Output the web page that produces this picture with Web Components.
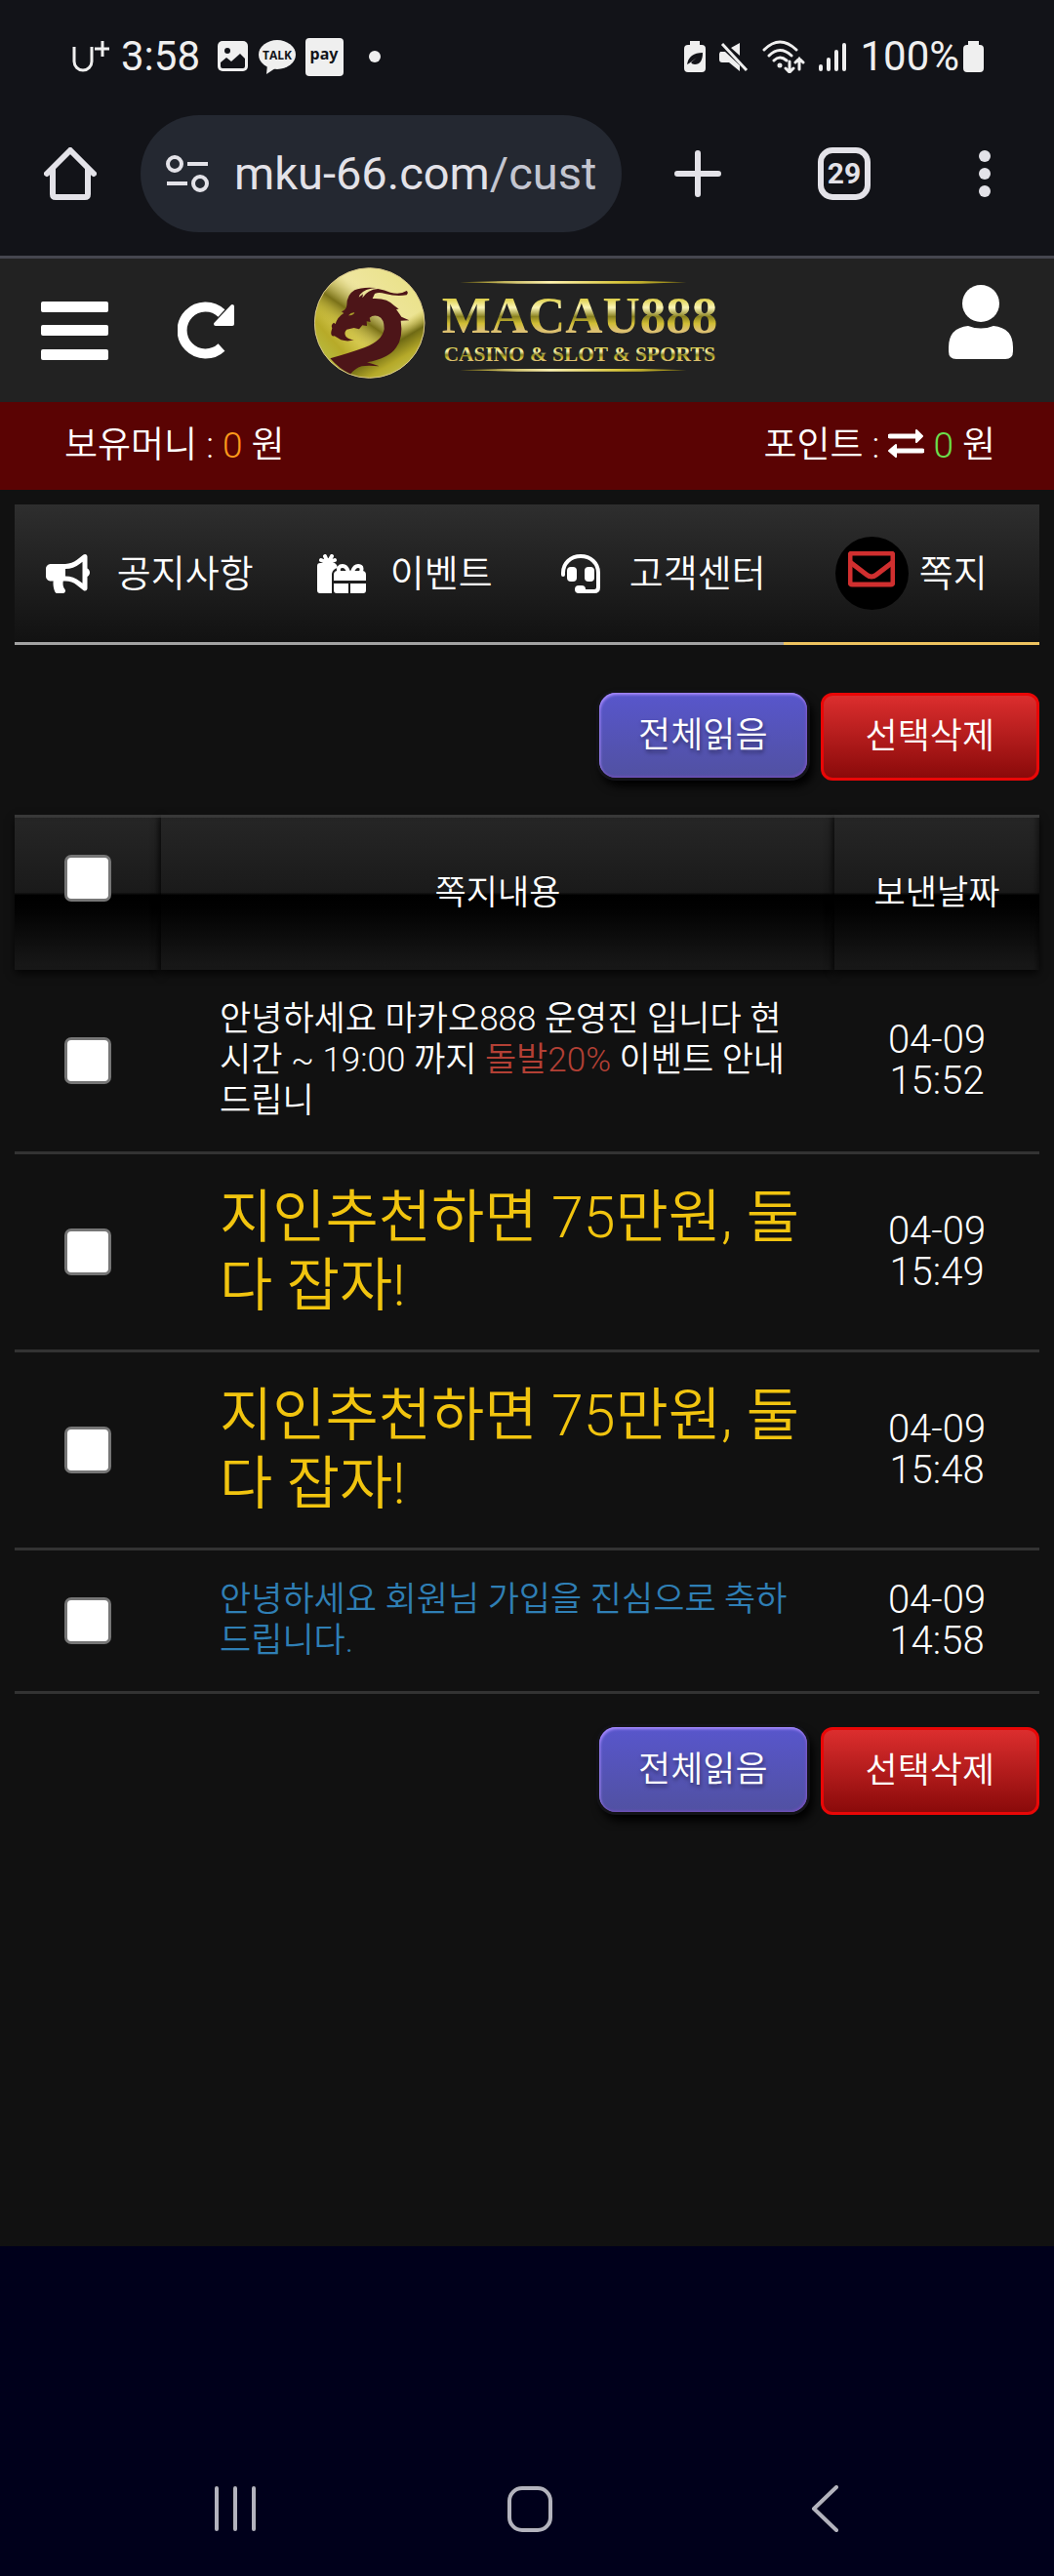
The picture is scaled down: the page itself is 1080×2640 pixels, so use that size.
<!DOCTYPE html>
<html lang="ko">
<head>
<meta charset="utf-8">
<meta name="viewport" content="width=device-width, initial-scale=1">
<title>쪽지</title>
<style>
  html, body { margin: 0; }
  body {
    min-height: 100vh;
    display: flex;
    flex-direction: column;
    background: #111;
    color: #fff;
    font-family: Roboto, "Noto Sans CJK KR", sans-serif;
    font-weight: 350;
    font-size: 36px;
    line-height: 42px;
  }
  main { flex: 1; padding: 15px 15px 0; }
</style>
</head>
<body>
  <phone-status time="3:58" battery="100%"></phone-status>
  <browser-bar host="mku-66.com" path="/cust" tabs="29"></browser-bar>
  <site-header></site-header>
  <money-bar></money-bar>
  <main>
    <site-nav>
      <nav-tab icon="notice">공지사항</nav-tab>
      <nav-tab icon="event">이벤트</nav-tab>
      <nav-tab icon="support">고객센터</nav-tab>
      <nav-tab icon="mail" active>쪽지</nav-tab>
    </site-nav>
    <action-row>
      <gloss-button type="read">전체읽음</gloss-button>
      <gloss-button type="delete">선택삭제</gloss-button>
    </action-row>
    <message-table></message-table>
    <action-row>
      <gloss-button type="read">전체읽음</gloss-button>
      <gloss-button type="delete">선택삭제</gloss-button>
    </action-row>
  </main>
  <system-nav></system-nav>

<script>
/** Attaches an open shadow root and fills it once */
class BaseElement extends HTMLElement {
  constructor() {
    super();
    this.attachShadow({ mode: 'open' });
  }

  connectedCallback() {
    this.shadowRoot.innerHTML = this.template();
  }

  template() {
    return '<slot></slot>';
  }
}

class PhoneStatus extends BaseElement {
  template() {
    return `
      <style>
        :host {
          display: flex;
          align-items: center;
          justify-content: space-between;
          height: 116px;
          padding: 0 72px;
          background: #121318;
          color: #efefef;
          font: 400 42px/48px Roboto, sans-serif;
        }
        div { display: flex; align-items: center; }
        svg { display: block; fill: currentColor; }
        .left { gap: 12px; }
        .apps { gap: 10px; margin-left: 6px; }
        .dot { width: 12px; height: 12px; border-radius: 50%; background: currentColor; margin-left: 16px; }
        .right { gap: 14px; }
        .level { gap: 4px; }
      </style>
      <div class="left">
        <svg width="40" height="36" viewBox="0 0 40 36" fill="none" aria-label="U+">
          <path d="M4 8v15a9 9 0 0 0 18 0V8" fill="none" stroke="currentColor" stroke-width="3"/>
          <path d="M25 10h15M33 2v16" stroke="currentColor" stroke-width="3"/>
        </svg>
        <span>${this.getAttribute('time')}</span>
        <div class="apps">
          <svg width="32" height="32" viewBox="0 0 32 32" aria-hidden="true">
            <rect width="31" height="31" rx="5"/>
            <circle cx="10" cy="10" r="3" fill="#121318"/>
            <path d="M3 22l6-5 5 4 9-8 5 5v8q0 2-2 2H5q-2 0-2-2z" fill="#121318"/>
          </svg>
          <svg width="38" height="36" viewBox="0 0 38 36" aria-hidden="true">
            <ellipse cx="19" cy="16" rx="19" ry="15"/>
            <path d="M9 26l-1 10 9-6z"/>
            <text x="19" y="21" text-anchor="middle" font-family="Open Sans, sans-serif" font-weight="700" font-size="12" fill="#121318">TALK</text>
          </svg>
          <svg width="39" height="39" viewBox="0 0 39 39" aria-hidden="true">
            <rect width="39" height="39" rx="4"/>
            <text x="19" y="22" text-anchor="middle" font-family="Noto Sans, sans-serif" font-weight="700" font-size="16" fill="#121318">pay</text>
          </svg>
          <span class="dot"></span>
        </div>
      </div>
      <div class="right">
        <svg width="22" height="32" viewBox="0 0 22 32" aria-hidden="true">
          <path d="M6 0h10v4h2q4 0 4 4v20q0 4-4 4H4q-4 0-4-4V8q0-4 4-4h2z"/>
          <path d="M3 24q2-12 16-12 0 12-8 12-3 0-4-2l6-5-8 6z" fill="#121318"/>
        </svg>
        <svg width="30" height="32" viewBox="0 0 30 32" aria-hidden="true">
          <path d="M21 2v13l-9-8zM1 11h5l15 14v6L10 22H3q-3 0-3-3v-6z"/>
          <path d="M3 3l25 27" stroke="currentColor" stroke-width="3"/>
        </svg>
        <svg width="44" height="34" viewBox="0 0 44 34" fill="none" stroke="currentColor" stroke-width="3" stroke-linecap="round" aria-hidden="true">
          <path d="M2 10q16-16 33 0M7 16q11-11 23 0M12 21q6-6 13 0" fill="none"/>
          <circle cx="18" cy="26" r="1"/>
          <path d="M28 22v10M24 29l4 4 4-4M38 30V19M34 23l4-4 4 4" fill="none"/>
        </svg>
        <svg width="28" height="32" viewBox="0 0 28 32" stroke="currentColor" stroke-width="4" stroke-linecap="round" aria-hidden="true">
          <path d="M2 26v3M10 19v10M18 11v18M26 4v25"/>
        </svg>
        <div class="level">
          <span>${this.getAttribute('battery')}</span>
          <svg width="21" height="32" viewBox="0 0 21 32" aria-hidden="true">
            <path d="M5 0h11v4h1q4 0 4 4v20q0 4-4 4H4q-4 0-4-4V8q0-4 4-4h1z"/>
          </svg>
        </div>
      </div>`;
  }
}

class BrowserBar extends BaseElement {
  template() {
    return `
      <style>
        :host {
          display: flex;
          align-items: center;
          padding: 2px 45px 24px;
          background: #121318;
          border-bottom: 3px solid #45464f;
          color: #e3e2e8;
          font-family: Roboto, sans-serif;
          font-weight: 400;
        }
        button {
          flex: none;
          padding: 0;
          border: 0;
          background: none;
          color: inherit;
          font: inherit;
        }
        svg { display: block; }
        .address {
          flex: 1;
          min-width: 0;
          height: 120px;
          margin: 0 54px 0 45px;
          padding: 0 20px 0 26px;
          box-sizing: border-box;
          border-radius: 60px;
          background: #242831;
          display: flex;
          align-items: center;
          gap: 25px;
        }
        .address svg { flex: none; }
        .url { font-size: 47px; line-height: 56px; white-space: nowrap; overflow: hidden; }
        .url span { color: #c3c5d0; }
        .tabs {
          width: 54px;
          height: 54px;
          margin: 0 111px 0 99px;
          border: 6px solid;
          border-radius: 15px;
          font-size: 30px;
          line-height: 42px;
          font-weight: 700;
        }
        .more { margin-right: 20px; }
      </style>
      <button type="button" aria-label="홈">
        <svg width="54" height="54" viewBox="0 0 54 54" fill="none" stroke="currentColor" stroke-width="6" stroke-linecap="round" stroke-linejoin="round">
          <path d="M3 27L27 3l24 24M9 22v26q0 3 3 3h30q3 0 3-3V22"/>
        </svg>
      </button>
      <div class="address">
        <svg width="45" height="38" viewBox="0 0 45 38" fill="none" stroke="currentColor" stroke-width="4" aria-hidden="true">
          <circle cx="9" cy="9" r="7"/><path d="M22 9h21M1 29h21"/><circle cx="35" cy="29" r="7"/>
        </svg>
        <div class="url">${this.getAttribute('host')}<span>${this.getAttribute('path')}</span></div>
      </div>
      <button type="button" aria-label="새 탭">
        <svg width="48" height="48" viewBox="0 0 48 48" stroke="currentColor" stroke-width="6" stroke-linecap="round"><path d="M24 3v42M3 24h42"/></svg>
      </button>
      <button type="button" class="tabs">${this.getAttribute('tabs')}</button>
      <button type="button" class="more" aria-label="메뉴">
        <svg width="12" height="48" viewBox="0 0 12 48" fill="currentColor"><circle cx="6" cy="6" r="6"/><circle cx="6" cy="24" r="6"/><circle cx="6" cy="42" r="6"/></svg>
      </button>`;
  }
}

class SiteHeader extends BaseElement {
  template() {
    return `
      <style>
        :host {
          display: flex;
          align-items: center;
          height: 147px;
          padding: 0 42px;
          background: #222;
        }
        button, a { display: block; flex: none; padding: 0; border: 0; background: none; color: #fff; }
        svg { display: block; }
        .reload { margin: 0 82px 0 71px; }
        .user { margin-left: auto; }
      </style>
      <button type="button" aria-label="메뉴">
        <svg width="69" height="60" viewBox="0 0 69 60" fill="currentColor">
          <rect width="69" height="11" rx="2"/><rect y="24" width="69" height="11" rx="2"/><rect y="49" width="69" height="11" rx="2"/>
        </svg>
      </button>
      <button type="button" class="reload" aria-label="새로고침">
        <svg width="58" height="59" viewBox="0 0 58 59" fill="currentColor">
          <path d="M45 47A24 24 0 1 1 45 12" fill="none" stroke="currentColor" stroke-width="10"/>
          <path d="M56 5v18H39z" stroke="currentColor" stroke-width="4" stroke-linejoin="round"/>
        </svg>
      </button>
      <a href="#" aria-label="MACAU888"><brand-logo></brand-logo></a>
      <button type="button" class="user" aria-label="내 정보">
        <svg width="66" height="94" viewBox="0 0 66 94" fill="currentColor">
          <circle cx="33" cy="19" r="19"/>
          <path d="M20 42q13 5 26 0 20 2 20 22v4q0 8-8 8H8q-8 0-8-8v-4q0-20 20-22z"/>
        </svg>
      </button>`;
  }
}

class BrandLogo extends BaseElement {
  template() {
    return `
      <style>
        :host { display: block; }
        svg { display: block; }
        text { font-family: "Liberation Serif", serif; font-weight: 700; }
      </style>
      <svg width="413" height="130" viewBox="66 42 1239 390">
        <defs>
          <linearGradient id="coin" x1="0" y1=".85" x2=".85" y2="0.1">
            <stop offset="0" stop-color="#b9c24a"/>
            <stop offset=".22" stop-color="#b7aa28"/>
            <stop offset=".38" stop-color="#d8cb52"/>
            <stop offset=".62" stop-color="#efe6a0"/>
            <stop offset="1" stop-color="#eae28a"/>
          </linearGradient>
          <linearGradient id="sheen" x1=".2" y1="0" x2=".8" y2="1">
            <stop offset="0" stop-color="#efe6a0" stop-opacity="0"/>
            <stop offset=".62" stop-color="#c0b030" stop-opacity="0"/>
            <stop offset=".74" stop-color="#6f6a14"/>
            <stop offset=".86" stop-color="#b5a929"/>
            <stop offset="1" stop-color="#c6c552"/>
          </linearGradient>
          <linearGradient id="shade" x1=".1" y1=".55" x2=".42" y2=".08">
            <stop offset=".1" stop-color="#b7aa28" stop-opacity="0"/>
            <stop offset=".45" stop-color="#7a7118"/>
            <stop offset=".9" stop-color="#efe6a0" stop-opacity="0"/>
          </linearGradient>
          <linearGradient id="letters" x1="0" y1="0" x2="0" y2="1">
            <stop offset=".18" stop-color="#d9c93a"/>
            <stop offset=".36" stop-color="#fbf5b6"/>
            <stop offset=".52" stop-color="#8a8220"/>
            <stop offset=".64" stop-color="#d0bd34"/>
            <stop offset=".76" stop-color="#dcc070"/>
          </linearGradient>
          <linearGradient id="rule">
            <stop offset="0" stop-color="#8a7a10"/>
            <stop offset=".4" stop-color="#fff3b0"/>
            <stop offset=".7" stop-color="#d8c63c"/>
            <stop offset="1" stop-color="#8a7a10"/>
          </linearGradient>
        </defs>
        <circle cx="236" cy="213" r="169" fill="url(#coin)"/>
        <circle cx="236" cy="213" r="169" fill="url(#shade)"/>
        <circle cx="236" cy="213" r="169" fill="url(#sheen)" stroke="#d9c88a" stroke-width="3"/>
        <path fill="#4d1518" d="M115 322Q175 305 222 288Q275 268 281 232Q282 200 262 192Q246 188 236 197L239 210L227 208L228 222L214 220L204 232L188 228L166 233Q156 242 163 254Q172 264 188 264Q172 272 148 265L128 253Q116 255 118 240L121 229Q116 219 126 212L131 216Q138 194 157 183L150 178Q165 172 166 158Q166 126 190 112Q214 101 256 105Q222 107 206 126L203 134L216 124L214 136Q230 110 262 108Q282 112 300 119Q330 127 350 114Q357 119 350 127Q320 133 284 123Q264 117 252 123L245 138Q290 135 312 160L326 170L318 171Q330 188 334 194L358 205L332 206Q340 258 318 288Q296 322 228 334Q245 338 266 346Q230 342 212 346Q190 353 178 370Q142 354 115 322Z"/>
        <path fill="#a79b2a" d="M171 190q8-10 19-9-3 8-14 9z"/>
        <path fill="url(#rule)" d="M513 88l140-4h420l137 4-140 4H690z M513 358l140-4h420l137 4-140 4H690z"/>
        <text x="458" y="244" font-size="159" fill="url(#letters)">MACAU888</text>
        <text x="464" y="331" font-size="64" fill="url(#letters)">CASINO &amp; SLOT &amp; SPORTS</text>
      </svg>`;
  }
}

class MoneyBar extends BaseElement {
  template() {
    return `
      <style>
        :host {
          display: flex;
          align-items: center;
          justify-content: space-between;
          min-height: 90px;
          padding: 0 60px 0 66px;
          background: #5a0303;
          font-size: 37px;
        }
        .cash { color: #ff9a1a; }
        .point { color: #6be04e; }
        svg { width: 37px; height: 29px; }
      </style>
      <div>보유머니 : <span class="cash">0</span> 원</div>
      <div>포인트 :
        <svg viewBox="0 0 37 29" fill="#fff" stroke="#fff" stroke-linejoin="round" aria-hidden="true">
          <path d="M2 7h28M35 22H8" stroke-width="5" stroke-linecap="round"/>
          <path d="M29 1l6 6-6 6zM8 16l-7 6 7 6z" stroke-width="2"/>
        </svg>
        <span class="point">0</span> 원</div>`;
  }
}

class SiteNav extends BaseElement {
  template() {
    return `
      <style>
        :host { display: block; margin-bottom: 15px; }
        nav { display: flex; background: linear-gradient(#2e2e2e, #111); }
      </style>
      <nav><slot></slot></nav>`;
  }
}

const TAB_ICONS = {
  notice: `<svg width="45" height="40" viewBox="0 0 576 512" fill="currentColor" aria-hidden="true">
    <path d="M576 240c0-24-13-44-32-55V32c0-9-7-32-32-32-7 0-14 2-20 7l-85 68c-43 34-96 53-151 53H64c-35 0-64 29-64 64v96c0 35 29 64 64 64h34c-2 10-2 21-2 32 0 40 9 77 25 111 5 11 17 17 28 17h75c26 0 42-30 26-51-17-21-26-48-26-77 0-11 1-22 4-32h28c55 0 108 19 151 53l85 68c6 5 13 7 20 7 25 0 32-23 32-32V295c19-11 32-31 32-55zm-96 141l-33-26c-54-43-122-67-191-67v-96c69 0 137-24 191-67l33-26z"/></svg>`,
  event: `<svg width="50" height="40" viewBox="0 0 50 40" fill="currentColor" aria-hidden="true">
    <path d="M0 12q0-3 3-3h15q3 2 3 5-5 1-6 6v20H3q-3 0-3-3z"/>
    <path d="M11 9L4 6M11 9L8 2M11 9l4-7M11 9l7-3" stroke="currentColor" stroke-width="4" stroke-linecap="round"/>
    <path d="M17 27v-6q0-4 4-4h25q4 0 4 4v6zM17 30h15v10H20q-3 0-3-3zM34 30h16v7q0 3-3 3H34z"/>
    <path d="M22 18q-1-6 4-6 4 0 6 6M36 18q2-6 6-6 5 0 3 6" fill="none" stroke="currentColor" stroke-width="4"/></svg>`,
  support: `<svg width="40" height="40" viewBox="0 0 40 40" fill="currentColor" aria-hidden="true">
    <path d="M2 21v-2C2 9 10 2 20 2s18 7 18 17v15q0 4-4 4H19" fill="none" stroke="currentColor" stroke-width="4" stroke-linecap="round"/>
    <rect x="6" y="13" width="10" height="15" rx="4"/><rect x="24" y="13" width="10" height="15" rx="4"/>
    <rect x="14" y="32" width="11" height="8" rx="4"/></svg>`,
  mail: `<svg width="48" height="46" viewBox="0 0 48 46" fill="none" stroke="#d02f2f" stroke-width="5" aria-hidden="true">
    <rect x="2" y="2" width="44" height="32" rx="2"/>
    <path d="M2 11l17 13q5 4 10 0l17-13"/></svg>`
};

class NavTab extends BaseElement {
  template() {
    return `
      <style>
        :host { display: block; flex: 1; }
        a {
          display: flex;
          align-items: center;
          justify-content: center;
          gap: 25px;
          height: 141px;
          padding-left: 12px;
          border-bottom: 3px solid #a3a3a3;
          color: #fff;
          font-size: 38px;
          white-space: nowrap;
          text-decoration: none;
        }
        .icon { display: flex; align-items: center; justify-content: center; width: 50px; }
        :host([active]) a { gap: 11px; padding-left: 0; border-color: #eec35f; }
        :host([active]) .icon { width: 75px; height: 75px; border-radius: 50%; background: #000; }
      </style>
      <a href="#"><span class="icon">${TAB_ICONS[this.getAttribute('icon')]}</span><span><slot></slot></span></a>`;
  }
}

class ActionRow extends BaseElement {
  template() {
    return `
      <style>
        :host { display: flex; justify-content: flex-end; gap: 14px; padding: 34px 0 35px; }
      </style>
      <slot></slot>`;
  }
}

class GlossButton extends BaseElement {
  template() {
    return `
      <style>
        :host { display: block; }
        button {
          display: block;
          height: 90px;
          padding: 0 43px;
          border: 3px solid #e90707;
          border-radius: 12px;
          background: linear-gradient(#dc2e2e, #8a0a0a);
          color: #fff;
          font: inherit;
        }
        :host([type="read"]) button {
          height: 87px;
          padding: 0 40px;
          border: 0;
          border-radius: 17px;
          background: linear-gradient(#5856cc, #5151a2);
          box-shadow: inset 1px 2px 3px #a98bff, inset -1px -1px 3px #7a4fc0, 0 0 0 3px #131318, 4px 7px 10px 2px #000;
          text-shadow: 1px 3px 4px #0006;
        }
      </style>
      <button type="button"><slot></slot></button>`;
  }
}

const MESSAGES = [
  { text: '안녕하세요 마카오888 운영진 입니다 현시간 ~ 19:00 까지 <em>돌발20%</em> 이벤트 안내드립니', date: '04-09', time: '15:52', type: '' },
  { text: '지인추천하면 75만원, 둘다 잡자!', date: '04-09', time: '15:49', type: 'promo' },
  { text: '지인추천하면 75만원, 둘다 잡자!', date: '04-09', time: '15:48', type: 'promo' },
  { text: '안녕하세요 회원님 가입을 진심으로 축하드립니다.', date: '04-09', time: '14:58', type: 'welcome' }
];

class MessageTable extends BaseElement {
  template() {
    const rows = MESSAGES.map((m) => `
      <tr>
        <td class="check"><input type="checkbox" aria-label="쪽지 선택"></td>
        <td class="text ${m.type}"><a href="#">${m.text}</a></td>
        <td class="date">${m.date}<br>${m.time}</td>
      </tr>`).join('');

    return `
      <style>
        :host { display: block; font-size: 35px; }
        table { width: 100%; table-layout: fixed; border-collapse: separate; border-spacing: 0; }
        col.check { width: 150px; }
        col.date { width: 210px; }
        th {
          height: 156px;
          padding: 0;
          border-top: 3px solid #383838;
          background: linear-gradient(#262626, #1a1a1a 49%, #000 51%, #020202 60%, #191919);
          box-shadow: inset -6px 0 6px -4px #0008, 0 4px 8px #000a;
          font-weight: inherit;
        }
        th.check { height: 124px; padding-bottom: 32px; }
        td { padding: 30px 0; border-bottom: 3px solid #333; }
        td.text { padding: 30px 26px 30px 60px; }
        td.date { font-size: 40px; }
        .check, .date { text-align: center; }
        input {
          appearance: none;
          display: block;
          width: 48px;
          height: 48px;
          margin: 0 auto;
          border: 3px solid #767676;
          border-radius: 7px;
          background: #fff;
        }
        a { color: inherit; text-decoration: none; }
        em { font-style: normal; color: #b34035; }
        .promo { color: #f1c40f; font-size: 59px; line-height: 70px; }
        .welcome { color: #2f7fb5; }
      </style>
      <table>
        <colgroup><col class="check"><col><col class="date"></colgroup>
        <thead>
          <tr>
            <th class="check"><input type="checkbox" aria-label="전체 선택"></th>
            <th>쪽지내용</th>
            <th>보낸날짜</th>
          </tr>
        </thead>
        <tbody>${rows}</tbody>
      </table>`;
  }
}

class SystemNav extends BaseElement {
  template() {
    return `
      <style>
        :host {
          display: flex;
          padding: 236px 84px 36px 90px;
          background: #00001b;
          color: #b3b3bd;
        }
        button {
          flex: 1;
          display: flex;
          justify-content: center;
          padding: 9px 0;
          border: 0;
          background: none;
          color: inherit;
        }
        svg { width: 48px; height: 48px; fill: none; stroke: currentColor; stroke-width: 4; stroke-linecap: round; stroke-linejoin: round; }
      </style>
      <button type="button" aria-label="최근 앱"><svg viewBox="0 0 48 48"><path d="M5 3v42M24 3v42M43 3v42"/></svg></button>
      <button type="button" aria-label="홈 화면"><svg viewBox="0 0 48 48"><rect x="3" y="3" width="42" height="43" rx="13"/></svg></button>
      <button type="button" aria-label="뒤로"><svg viewBox="0 0 48 48"><path d="M36 2L13 24l23 22"/></svg></button>`;
  }
}

customElements.define('phone-status', PhoneStatus);
customElements.define('browser-bar', BrowserBar);
customElements.define('brand-logo', BrandLogo);
customElements.define('site-header', SiteHeader);
customElements.define('money-bar', MoneyBar);
customElements.define('site-nav', SiteNav);
customElements.define('nav-tab', NavTab);
customElements.define('action-row', ActionRow);
customElements.define('gloss-button', GlossButton);
customElements.define('message-table', MessageTable);
customElements.define('system-nav', SystemNav);
</script>
</body>
</html>
